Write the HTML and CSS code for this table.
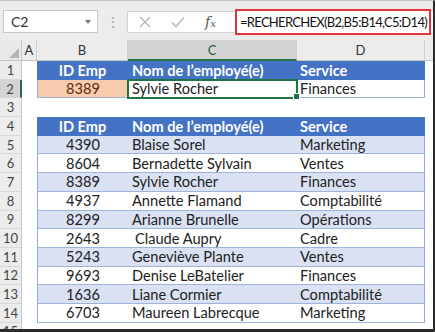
FILE: index.html
```html
<!DOCTYPE html>
<html lang="fr">
<head>
<meta charset="utf-8">
<link rel="stylesheet" href="styles.css">
</head>
<body>
<div class="window">
  <div class="toolbar">
    <div class="namebox"><span>C2</span><span class="caret"></span></div>
    <div class="sep">⋮</div>
    <div class="fbar">
      <span class="slot"><svg width="12" height="12" viewBox="0 0 12 12"><path d="M1 1L11 11M11 1L1 11" stroke="#b4b4b4" stroke-width="1.3" fill="none"/></svg></span>
      <span class="slot"><svg width="14" height="12" viewBox="0 0 14 12"><path d="M1 6.5L5 10.5L13 1.5" stroke="#b4b4b4" stroke-width="1.4" fill="none"/></svg></span>
      <span class="slot fx"><i>f</i><span class="fxx">x</span></span>
      <div class="formula">=RECHERCHEX(B2,B5:B14,C5:D14)</div>
    </div>
  </div>
  <div class="sheet">
    <div class="row colhdr">
      <div class="corner"><span class="tri"></span></div>
      <div class="ch">A</div><div class="ch">B</div><div class="ch sel">C</div><div class="ch">D</div><div class="ch last"></div>
    </div>
    <div class="row">
      <div class="rh">1</div><div class="c"></div>
      <div class="c th id">ID Emp</div><div class="c th">Nom de l’employé(e)</div><div class="c th">Service</div><div class="c"></div>
    </div>
    <div class="row">
      <div class="rh sel">2</div><div class="c"></div>
      <div class="c id orange bl bb">8389</div><div class="c name active bb">Sylvie Rocher</div><div class="c svc br bb">Finances</div><div class="c"></div>
    </div>
    <div class="row">
      <div class="rh">3</div><div class="c"></div><div class="c"></div><div class="c"></div><div class="c"></div><div class="c"></div>
    </div>
    <div class="row">
      <div class="rh">4</div><div class="c"></div>
      <div class="c th id">ID Emp</div><div class="c th">Nom de l’employé(e)</div><div class="c th">Service</div><div class="c"></div>
    </div>
    <div class="row band">
      <div class="rh">5</div><div class="c"></div>
      <div class="c id bl bb">4390</div><div class="c name bb">Blaise Sorel</div><div class="c svc br bb">Marketing</div><div class="c"></div>
    </div>
    <div class="row">
      <div class="rh">6</div><div class="c"></div>
      <div class="c id bl bb">8604</div><div class="c name bb">Bernadette Sylvain</div><div class="c svc br bb">Ventes</div><div class="c"></div>
    </div>
    <div class="row band">
      <div class="rh">7</div><div class="c"></div>
      <div class="c id bl bb">8389</div><div class="c name bb">Sylvie Rocher</div><div class="c svc br bb">Finances</div><div class="c"></div>
    </div>
    <div class="row">
      <div class="rh">8</div><div class="c"></div>
      <div class="c id bl bb">4937</div><div class="c name bb">Annette Flamand</div><div class="c svc br bb">Comptabilité</div><div class="c"></div>
    </div>
    <div class="row band">
      <div class="rh">9</div><div class="c"></div>
      <div class="c id bl bb">8299</div><div class="c name bb">Arianne Brunelle</div><div class="c svc br bb">Opérations</div><div class="c"></div>
    </div>
    <div class="row">
      <div class="rh">10</div><div class="c"></div>
      <div class="c id bl bb">2643</div><div class="c name indent bb">Claude Aupry</div><div class="c svc br bb">Cadre</div><div class="c"></div>
    </div>
    <div class="row band">
      <div class="rh">11</div><div class="c"></div>
      <div class="c id bl bb">5243</div><div class="c name bb">Geneviève Plante</div><div class="c svc br bb">Ventes</div><div class="c"></div>
    </div>
    <div class="row">
      <div class="rh">12</div><div class="c"></div>
      <div class="c id bl bb">9693</div><div class="c name bb">Denise LeBatelier</div><div class="c svc br bb">Finances</div><div class="c"></div>
    </div>
    <div class="row band">
      <div class="rh">13</div><div class="c"></div>
      <div class="c id bl bb">1636</div><div class="c name bb">Liane Cormier</div><div class="c svc br bb">Comptabilité</div><div class="c"></div>
    </div>
    <div class="row">
      <div class="rh">14</div><div class="c"></div>
      <div class="c id bl bb">6703</div><div class="c name bb">Maureen Labrecque</div><div class="c svc br bb">Marketing</div><div class="c"></div>
    </div>
    <div class="row">
      <div class="rh">15</div><div class="c"></div><div class="c"></div><div class="c"></div><div class="c"></div><div class="c"></div>
    </div>
  </div>
</div>
</body>
</html>
```

FILE: styles.css
```css
* { box-sizing: border-box; }
html, body { margin: 0; padding: 0; background: #fff; }
body { font-family: Lato, "Open Sans", sans-serif; }

.window {
  width: 435px;
  height: 332px;
  overflow: hidden;
  border-top: 1px solid #c4c4c4;
  border-right: 2px solid #2b2b2b;
  border-bottom: 3px solid #2b2b2b;
  background: #fff;
}

.toolbar {
  height: 39px;
  background: #ececec;
  display: flex;
  align-items: center;
  padding: 2px 0 0 3px;
}

.namebox {
  width: 95px;
  height: 23px;
  background: #fff;
  border: 1px solid #c8c8c8;
  display: flex;
  align-items: center;
  justify-content: space-between;
  padding: 0 6px 0 7px;
  font-size: 14px;
  color: #333;
}
.caret {
  width: 0; height: 0;
  border-left: 3.5px solid transparent;
  border-right: 3.5px solid transparent;
  border-top: 4px solid #777;
}

.sep {
  width: 29px;
  text-align: center;
  color: #a8a8a8;
  font-size: 14px;
}

.fbar {
  flex: 1;
  height: 22px;
  background: #fff;
  border: 1px solid #d4d4d4;
  border-right: none;
  display: flex;
  align-items: center;
}
.slot {
  width: 33px;
  display: flex;
  justify-content: center;
  align-items: center;
}
.fx {
  font-family: "DejaVu Serif", "Liberation Serif", serif;
  font-size: 14px;
  color: #555;
}
.fx i { font-style: italic; }
.fxx { font-size: 10px; font-style: italic; margin-top: 4px; }

.formula {
  flex: none;
  margin-left: 8px;
  width: 196px;
  height: 26px;
  border: 2px solid #e0353b;
  display: flex;
  align-items: center;
  padding-left: 3px;
  font-size: 13px;
  letter-spacing: -0.7px;
  color: #111;
  white-space: nowrap;
  background: #fff;
  overflow: hidden;
}

.sheet { display: flex; flex-direction: column; }

.row {
  display: grid;
  grid-template-columns: 22px 15px 91px 169px 128px 1fr;
  height: 18.7px;
  font-size: 14.6px;
  color: #222;
}
.row.colhdr { height: 21px; }

.corner {
  background: #e9e9e9;
  border-right: 1px solid #c6c6c6;
  border-bottom: 1px solid #c6c6c6;
  position: relative;
}
.tri {
  position: absolute;
  right: 2px; bottom: 2px;
  width: 0; height: 0;
  border-left: 10px solid transparent;
  border-bottom: 10px solid #b6b6b6;
}

.ch {
  background: #ececec;
  border-right: 1px solid #cdcdcd;
  border-bottom: 1px solid #c6c6c6;
  display: flex;
  align-items: center;
  justify-content: center;
  font-size: 13px;
  color: #333;
}
.ch.sel {
  background: #d3d3d3;
  border-bottom: 2px solid #217346;
  color: #1e5d37;
}
.ch.last { border-right: none; }

.rh {
  background: #ececec;
  border-right: 1px solid #c6c6c6;
  border-bottom: 1px solid #d8d8d8;
  display: flex;
  align-items: center;
  justify-content: center;
  font-size: 13px;
  color: #444;
}
.rh.sel {
  background: #d3d3d3;
  border-right: 2px solid #217346;
}

.c {
  display: flex;
  align-items: center;
  white-space: nowrap;
  overflow: visible;
}
.th {
  background: #4472c4;
  color: #fff;
  font-weight: 700;
  padding-left: 4px;
}
.th.id { justify-content: center; padding-left: 0; }
.id { justify-content: center; }
.name { padding-left: 4px; }
.name.indent { padding-left: 7px; }
.svc { padding-left: 3px; }
.th + .th + .th { padding-left: 3px; }

.band .id, .band .name, .band .svc { background: #d9e1f2; }

.bl { border-left: 1px solid #8ea9db; }
.br { border-right: 1px solid #8ea9db; }
.bb { border-bottom: 1px solid #9fb4dd; }

.orange { background: #f8cbad; color: #5c2b14; }

.active {
  position: relative;
  outline: 2px solid #217346;
  outline-offset: -1px;
}
.active::after {
  content: "";
  position: absolute;
  right: -3px;
  bottom: -3px;
  width: 5px;
  height: 5px;
  background: #217346;
  border: 1px solid #fff;
}
```
